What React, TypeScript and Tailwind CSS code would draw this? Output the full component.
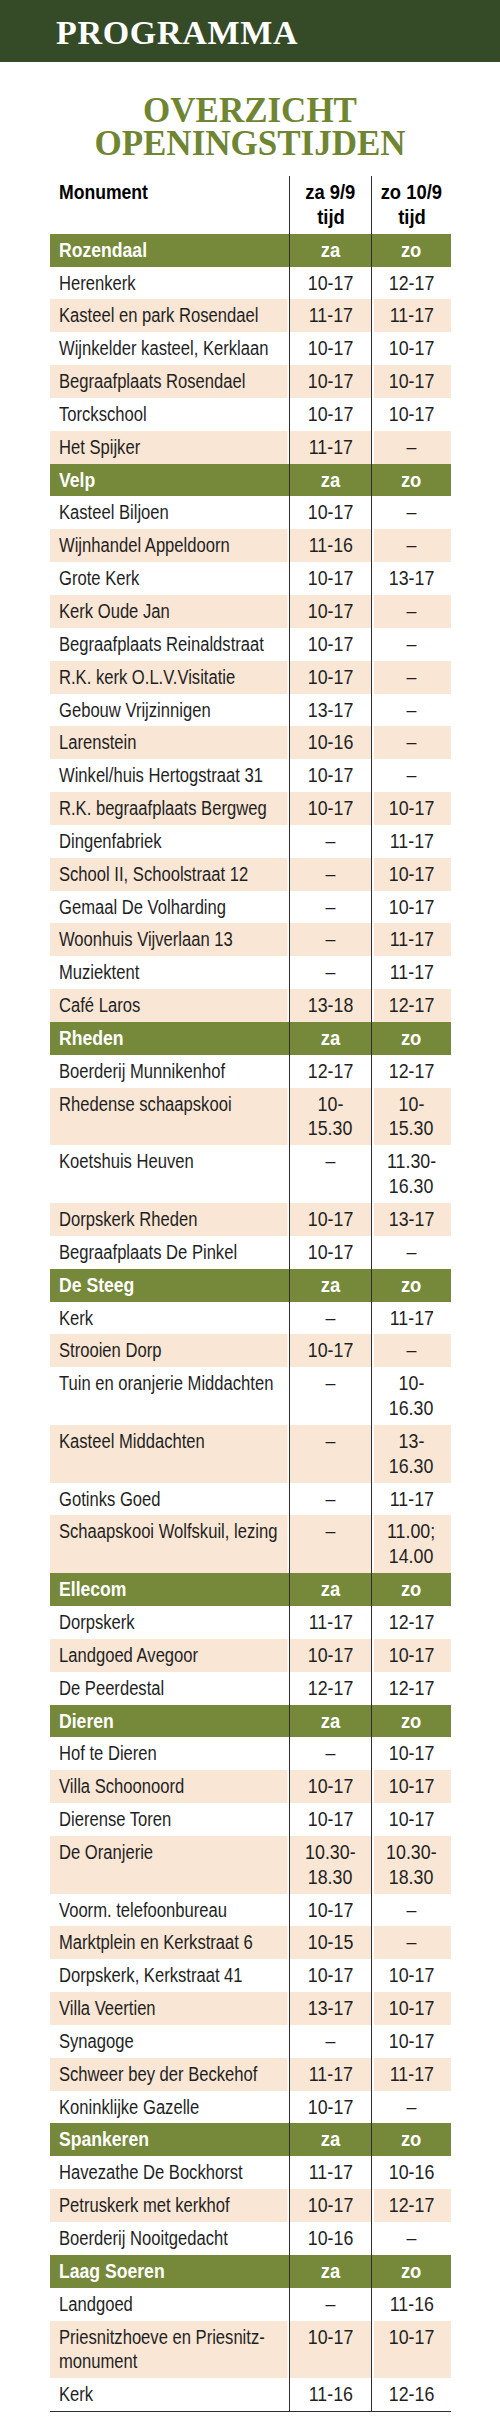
type Cell = string | string[];
type Row = [Cell, Cell, Cell];

interface Section {
  name: string;
  rows: Row[];
}

const sections: Section[] = [
  {
    name: "Rozendaal",
    rows: [
      ["Herenkerk", "10-17", "12-17"],
      ["Kasteel en park Rosendael", "11-17", "11-17"],
      ["Wijnkelder kasteel, Kerklaan", "10-17", "10-17"],
      ["Begraafplaats Rosendael", "10-17", "10-17"],
      ["Torckschool", "10-17", "10-17"],
      ["Het Spijker", "11-17", "–"],
    ],
  },
  {
    name: "Velp",
    rows: [
      ["Kasteel Biljoen", "10-17", "–"],
      ["Wijnhandel Appeldoorn", "11-16", "–"],
      ["Grote Kerk", "10-17", "13-17"],
      ["Kerk Oude Jan", "10-17", "–"],
      ["Begraafplaats Reinaldstraat", "10-17", "–"],
      ["R.K. kerk O.L.V.Visitatie", "10-17", "–"],
      ["Gebouw Vrijzinnigen", "13-17", "–"],
      ["Larenstein", "10-16", "–"],
      ["Winkel/huis Hertogstraat 31", "10-17", "–"],
      ["R.K. begraafplaats Bergweg", "10-17", "10-17"],
      ["Dingenfabriek", "–", "11-17"],
      ["School II, Schoolstraat 12", "–", "10-17"],
      ["Gemaal De Volharding", "–", "10-17"],
      ["Woonhuis Vijverlaan 13", "–", "11-17"],
      ["Muziektent", "–", "11-17"],
      ["Café Laros", "13-18", "12-17"],
    ],
  },
  {
    name: "Rheden",
    rows: [
      ["Boerderij Munnikenhof", "12-17", "12-17"],
      ["Rhedense schaapskooi", ["10-", "15.30"], ["10-", "15.30"]],
      ["Koetshuis Heuven", "–", ["11.30-", "16.30"]],
      ["Dorpskerk Rheden", "10-17", "13-17"],
      ["Begraafplaats De Pinkel", "10-17", "–"],
    ],
  },
  {
    name: "De Steeg",
    rows: [
      ["Kerk", "–", "11-17"],
      ["Strooien Dorp", "10-17", "–"],
      ["Tuin en oranjerie Middachten", "–", ["10-", "16.30"]],
      ["Kasteel Middachten", "–", ["13-", "16.30"]],
      ["Gotinks Goed", "–", "11-17"],
      ["Schaapskooi Wolfskuil, lezing", "–", ["11.00;", "14.00"]],
    ],
  },
  {
    name: "Ellecom",
    rows: [
      ["Dorpskerk", "11-17", "12-17"],
      ["Landgoed Avegoor", "10-17", "10-17"],
      ["De Peerdestal", "12-17", "12-17"],
    ],
  },
  {
    name: "Dieren",
    rows: [
      ["Hof te Dieren", "–", "10-17"],
      ["Villa Schoonoord", "10-17", "10-17"],
      ["Dierense Toren", "10-17", "10-17"],
      ["De Oranjerie", ["10.30-", "18.30"], ["10.30-", "18.30"]],
      ["Voorm. telefoonbureau", "10-17", "–"],
      ["Marktplein en Kerkstraat 6", "10-15", "–"],
      ["Dorpskerk, Kerkstraat 41", "10-17", "10-17"],
      ["Villa Veertien", "13-17", "10-17"],
      ["Synagoge", "–", "10-17"],
      ["Schweer bey der Beckehof", "11-17", "11-17"],
      ["Koninklijke Gazelle", "10-17", "–"],
    ],
  },
  {
    name: "Spankeren",
    rows: [
      ["Havezathe De Bockhorst", "11-17", "10-16"],
      ["Petruskerk met kerkhof", "10-17", "12-17"],
      ["Boerderij Nooitgedacht", "10-16", "–"],
    ],
  },
  {
    name: "Laag Soeren",
    rows: [
      ["Landgoed", "–", "11-16"],
      [["Priesnitzhoeve en Priesnitz-", "monument"], "10-17", "10-17"],
      ["Kerk", "11-16", "12-16"],
    ],
  },
];

// geen smalle schreefloze letter beschikbaar: Liberation Sans horizontaal versmald
const nameText = "inline-block whitespace-nowrap scale-x-[0.83] origin-left";
const nameBold = "inline-block whitespace-nowrap scale-x-[0.88] origin-left";
const timeText = "inline-block whitespace-nowrap scale-x-[0.89] origin-center";
const timeBold = "inline-block whitespace-nowrap scale-x-[0.92] origin-center";

function Lines({ value, cls }: { value: Cell; cls: string }) {
  const lines = Array.isArray(value) ? value : [value];
  return (
    <>
      {lines.map((l, i) => (
        <span key={i} className="block">
          <span className={cls}>{l}</span>
        </span>
      ))}
    </>
  );
}

const rowGrid = "grid grid-cols-[239px_82px_80px]";
const divider = "border-l-[1.5px] border-[#2e2e2e]";

export default function App() {
  return (
    <div className="w-[500px] min-h-[2429px] bg-white font-['Liberation_Sans',Arial,sans-serif]">
      <div className="h-[62px] bg-[#354a27] pl-[56px] pt-[16px]">
        <div className="font-['Liberation_Serif',serif] text-[34px] leading-[34px] font-bold tracking-[0.02em] text-white">
          PROGRAMMA
        </div>
      </div>

      <h1 className="mt-[32px] text-center font-['Liberation_Serif',serif] text-[35px] leading-[33px] font-bold text-[#6f8532]">
        OVERZICHT
        <br />
        OPENINGSTIJDEN
      </h1>

      <div className="ml-[50px] mt-[16px] w-[401px] border-b-[1.5px] border-[#2e2e2e] text-[20px] leading-[24.85px] text-[#1f1f1f]">
        {/* kolomkoppen */}
        <div className={`${rowGrid} font-bold text-black`}>
          <div className="pl-[9px] py-[4px]">
            <Lines value="Monument" cls={nameBold} />
          </div>
          <div className={`${divider} py-[4px] text-center`}>
            <Lines value={["za 9/9", "tijd"]} cls={timeBold} />
          </div>
          <div className={`${divider} py-[4px] text-center`}>
            <Lines value={["zo 10/9", "tijd"]} cls={timeBold} />
          </div>
        </div>

        {sections.map((section) => (
          <div key={section.name}>
            <div className={`${rowGrid} bg-[#76883a] font-bold text-white`}>
              <div className="pl-[9px] py-[4px]">
                <Lines value={section.name} cls={nameBold} />
              </div>
              <div className={`${divider} py-[4px] text-center`}>
                <Lines value="za" cls={timeBold} />
              </div>
              <div className={`${divider} py-[4px] text-center`}>
                <Lines value="zo" cls={timeBold} />
              </div>
            </div>
            {section.rows.map((row, i) => (
              <div
                key={i}
                className={`${rowGrid} ${i % 2 === 1 ? "bg-[#f9e6d5]" : "bg-white"}`}
              >
                <div className="pl-[9px] py-[4px] shadow-[inset_-1.5px_0_0_#fff]">
                  <Lines value={row[0]} cls={nameText} />
                </div>
                <div className={`${divider} py-[4px] text-center`}>
                  <Lines value={row[1]} cls={timeText} />
                </div>
                <div className={`${divider} py-[4px] text-center shadow-[inset_2px_0_0_#fff]`}>
                  <Lines value={row[2]} cls={timeText} />
                </div>
              </div>
            ))}
          </div>
        ))}
      </div>
    </div>
  );
}
